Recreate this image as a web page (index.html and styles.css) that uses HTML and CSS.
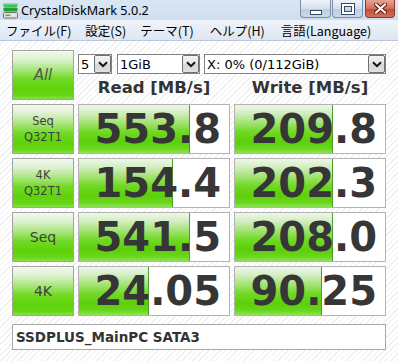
FILE: index.html
```html
<!DOCTYPE html>
<html>
<head>
  <meta charset="utf-8">
  <link rel="stylesheet" href="styles.css">
</head>
<body>
  <div class="window">
    <!-- Title bar -->
    <div class="titlebar">
      <svg class="app-icon" viewBox="0 0 17 17">
        <rect x="1.5" y="1" width="14" height="4" rx="1" fill="#3fbf55"/>
        <rect x="1.5" y="1" width="14" height="1.5" rx="0.7" fill="#8fe39a"/>
        <rect x="1.5" y="5.5" width="14" height="4" rx="1" fill="#1f9c3c"/>
        <rect x="1.5" y="10.5" width="14" height="5.5" rx="1" fill="#e4e4e4" stroke="#6f6f6f"/>
        <rect x="3.5" y="12.5" width="5" height="1.6" fill="#38c43a"/>
      </svg>
      <span class="title">CrystalDiskMark 5.0.2</span>
      <div class="caption-buttons">
        <div class="cap-btn">
          <span class="glyph-min"></span>
        </div>
        <div class="cap-btn">
          <span class="glyph-max"></span>
        </div>
        <div class="cap-btn cap-close">
          <svg width="13" height="11" viewBox="0 0 13 11">
            <path d="M2 1.5 L11 9.5 M11 1.5 L2 9.5" stroke="#5a1d16" stroke-width="4" stroke-linecap="square"/>
            <path d="M2 1.5 L11 9.5 M11 1.5 L2 9.5" stroke="#fff" stroke-width="2" stroke-linecap="square"/>
          </svg>
        </div>
      </div>
    </div>

    <!-- Menu bar -->
    <div class="menubar">
      <span>ファイル(F)</span>
      <span>設定(S)</span>
      <span>テーマ(T)</span>
      <span>ヘルプ(H)</span>
      <span>言語(Language)</span>
    </div>

    <div class="content">
      <div class="grid">
        <div class="btn-all">All</div>

        <div class="controls">
          <div class="selects">
            <div class="combo combo-count">
              <span>5</span>
              <span class="drop"><svg width="10" height="7" viewBox="0 0 10 7"><path d="M1 1.2 L5 5.2 L9 1.2" fill="none" stroke="#111" stroke-width="2"/></svg></span>
            </div>
            <div class="combo combo-size">
              <span>1GiB</span>
              <span class="drop"><svg width="10" height="7" viewBox="0 0 10 7"><path d="M1 1.2 L5 5.2 L9 1.2" fill="none" stroke="#111" stroke-width="2"/></svg></span>
            </div>
            <div class="combo combo-drive">
              <span>X: 0% (0/112GiB)</span>
              <span class="drop"><svg width="10" height="7" viewBox="0 0 10 7"><path d="M1 1.2 L5 5.2 L9 1.2" fill="none" stroke="#111" stroke-width="2"/></svg></span>
            </div>
          </div>
          <div class="headers">
            <div>Read [MB/s]</div>
            <div>Write [MB/s]</div>
          </div>
        </div>

        <!-- Results -->
        <div class="label two"><span>Seq</span><span>Q32T1</span></div>
        <div class="value" style="--fill: 111px">553.8</div>
        <div class="value" style="--fill: 98px">209.8</div>

        <div class="label two"><span>4K</span><span>Q32T1</span></div>
        <div class="value" style="--fill: 94px">154.4</div>
        <div class="value" style="--fill: 98px">202.3</div>

        <div class="label"><span>Seq</span></div>
        <div class="value" style="--fill: 111px">541.5</div>
        <div class="value" style="--fill: 98px">208.0</div>

        <div class="label"><span>4K</span></div>
        <div class="value" style="--fill: 70px">24.05</div>
        <div class="value" style="--fill: 87px">90.25</div>

        <div class="comment">SSDPLUS_MainPC SATA3</div>
      </div>
    </div>
  </div>
</body>
</html>
```

FILE: styles.css
```css
body {
  margin: 0;
  width: 398px;
  height: 361px;
  overflow: hidden;
  font-family: "DejaVu Sans", sans-serif;
  background: #fff;
}

.window {
  height: 361px;
  background: repeating-linear-gradient(135deg, #ffffff 0px, #ffffff 3px, #efefef 3px, #efefef 4px);
}

/* title bar */
.titlebar {
  height: 20px;
  display: flex;
  align-items: center;
  padding-left: 2px;
  background: linear-gradient(#dae6f4, #cfdeef);
}

.app-icon {
  width: 17px;
  height: 17px;
  margin-right: 2px;
}

.title {
  font-family: "Noto Sans", sans-serif;
  font-size: 12.6px;
  color: #000;
}

.caption-buttons {
  margin-left: auto;
  align-self: flex-start;
  display: flex;
  gap: 1px;
  padding-right: 3px;
}

.cap-btn {
  width: 31px;
  height: 18px;
  box-sizing: border-box;
  border: 1px solid #7c8ca4;
  border-top: none;
  border-radius: 0 0 4px 4px;
  background: linear-gradient(#eef3f9, #d3dfee 50%, #bccde3 51%, #c9d8ea);
  display: flex;
  align-items: center;
  justify-content: center;
}

.cap-close {
  width: 30px;
  margin-left: 1px;
  border-color: #8a3a2f;
  background: linear-gradient(#e8a493, #d46e58 50%, #c14a34 51%, #d2705a);
}

.glyph-min {
  width: 10px;
  height: 3px;
  margin-top: 7px;
  background: #fff;
  border: 1px solid #3b4a60;
}

.glyph-max {
  width: 8px;
  height: 6px;
  background: transparent;
  border: 2px solid #fff;
  outline: 1px solid #3b4a60;
  box-shadow: inset 0 0 0 1px #3b4a60;
}

/* menu bar */
.menubar {
  height: 20px;
  display: flex;
  align-items: center;
  gap: 14px;
  padding-left: 6px;
  font-family: "Noto Sans CJK JP", sans-serif;
  font-size: 12.5px;
  color: #000;
  background: linear-gradient(#f0f4fa, #dde6f2);
  border-bottom: 1px solid #b9c6d7;
}

.menubar span:nth-child(4),
.menubar span:nth-child(5) {
  margin-left: 2px;
}

/* main panel */
.content {
  padding: 9px 12px 0 12px;
}

.grid {
  display: grid;
  grid-template-columns: 62px 152px 152px;
  grid-template-rows: 50px repeat(4, 50px) 30px;
  gap: 4px;
}

.btn-all,
.label {
  box-sizing: border-box;
  border: 1px solid #a3a3a3;
  background: linear-gradient(#f3f9ef 0%, #dcf1cf 18%, #a6e577 40%, #72da26 58%, #5fd20a 78%, #66d614 92%, #84e046 100%);
  display: flex;
  flex-direction: column;
  align-items: center;
  justify-content: center;
  color: #3f3f3f;
}

.btn-all {
  font-size: 15px;
  font-style: italic;
  color: #555;
}

.label {
  font-size: 14px;
}

.label.two {
  font-size: 11.5px;
  line-height: 16px;
}

.controls {
  grid-column: 2 / 4;
  display: flex;
  flex-direction: column;
}

.selects {
  display: flex;
  margin-top: 4px;
}

.combo {
  height: 20px;
  box-sizing: border-box;
  border: 1px solid #828282;
  background: #fff;
  display: flex;
  align-items: center;
  padding-left: 2px;
  font-size: 13px;
  color: #000;
}

.combo-count {
  width: 34px;
  margin-right: 5px;
}

.combo-size {
  width: 83px;
  margin-right: 4px;
}

.combo-drive {
  width: 182px;
}

.drop {
  margin-left: auto;
  width: 17px;
  height: 18px;
  box-sizing: border-box;
  border: 1px solid #707070;
  border-radius: 2px;
  background: linear-gradient(#f4f4f4, #e4e4e4 50%, #d6d6d6 51%, #e0e0e0);
  display: flex;
  align-items: center;
  justify-content: center;
}

.headers {
  display: grid;
  grid-template-columns: 152px 152px;
  gap: 4px;
  margin-top: 4px;
  font-size: 16.5px;
  font-weight: bold;
  line-height: 20px;
  color: #333;
  text-align: center;
}

.value {
  box-sizing: border-box;
  border: 1px solid #b3b3b3;
  padding-right: 8px;
  font-size: 40px;
  font-weight: bold;
  line-height: 48px;
  color: #363636;
  text-align: right;
  background:
    linear-gradient(#4f9a2c, #4f9a2c) calc(var(--fill) - 1px) 0 / 1px 100% no-repeat,
    linear-gradient(#eef7ea 0%, #d4efc4 16%, #a0e26e 38%, #70d924 56%, #5dcf0a 76%, #68d61a 90%, #8ee258 100%) 0 0 / var(--fill) 100% no-repeat,
    #fff;
}

.comment {
  grid-column: 1 / 4;
  margin-top: 4px;
  box-sizing: border-box;
  border: 1px solid #a8a8a8;
  background: #fff;
  display: flex;
  align-items: center;
  padding-left: 3px;
  font-size: 13.5px;
  font-weight: bold;
  color: #333;
}
```
